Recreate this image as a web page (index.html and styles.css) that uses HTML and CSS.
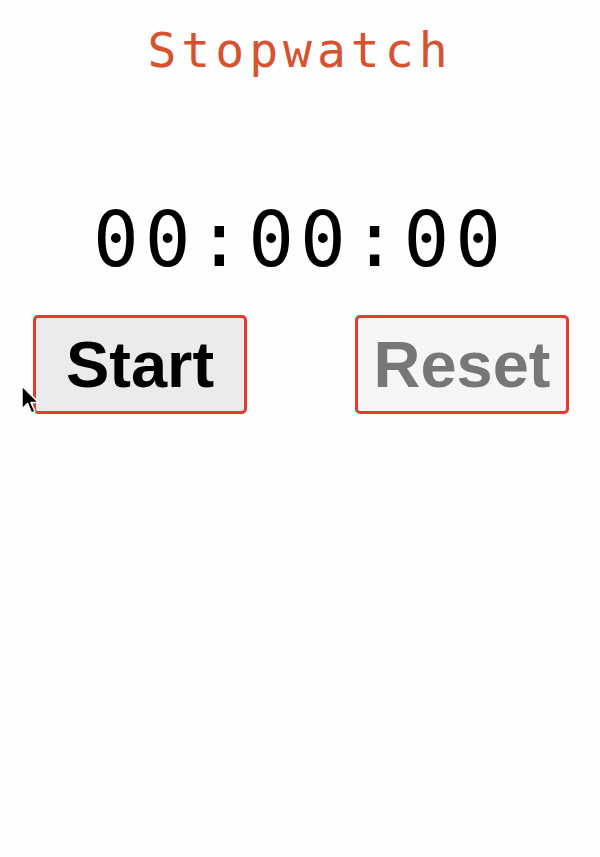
FILE: index.html
```html
<!DOCTYPE html>
<html>
<head>
<meta charset="utf-8">
<link rel="stylesheet" href="styles.css">
</head>
<body>
<main class="app">
  <h1 class="title">Stopwatch</h1>
  <div class="timer">00:00:00</div>
  <div class="controls">
    <button class="btn btn-start">Start</button>
    <button class="btn btn-reset" disabled>Reset</button>
  </div>
  <svg class="cursor" width="20" height="30" viewBox="0 0 20 30">
    <path d="M1 1 L1 24 L6.5 18.5 L10.5 28 L14 26.5 L10 17.5 L17.5 17.5 Z" fill="#000" stroke="#fff" stroke-width="1.5" stroke-linejoin="round"/>
  </svg>
</main>
</body>
</html>
```
FILE: styles.css
```css
html, body {
  margin: 0;
  padding: 0;
  background: #fefefe;
}
.app {
  position: relative;
  width: 600px;
  height: 857px;
  display: flex;
  flex-direction: column;
  align-items: center;
}
.title {
  margin: 22px 0 0;
  font-family: "DejaVu Sans Mono", monospace;
  font-weight: normal;
  font-size: 48px;
  letter-spacing: 5px;
  color: #d5532f;
  line-height: 1.2;
}
.timer {
  margin-top: 122px;
  font-family: "DejaVu Sans Mono", monospace;
  font-size: 76px;
  letter-spacing: 6px;
  color: #000;
  line-height: 1;
}
.controls {
  align-self: stretch;
  display: flex;
  justify-content: space-between;
  padding: 0 31px 0 33px;
  margin-top: 37px;
}
.btn {
  width: 214px;
  height: 99px;
  border: 3px solid #e53a2f;
  border-radius: 5px;
  font-family: "Liberation Sans", Arial, sans-serif;
  font-weight: bold;
  font-size: 65px;
  padding: 0;
}
.btn-start {
  background: #ebebed;
  color: #000;
}
.btn-reset {
  background: #f6f6f8;
  color: #777;
}
.cursor {
  position: absolute;
  left: 21px;
  top: 385px;
}
```
